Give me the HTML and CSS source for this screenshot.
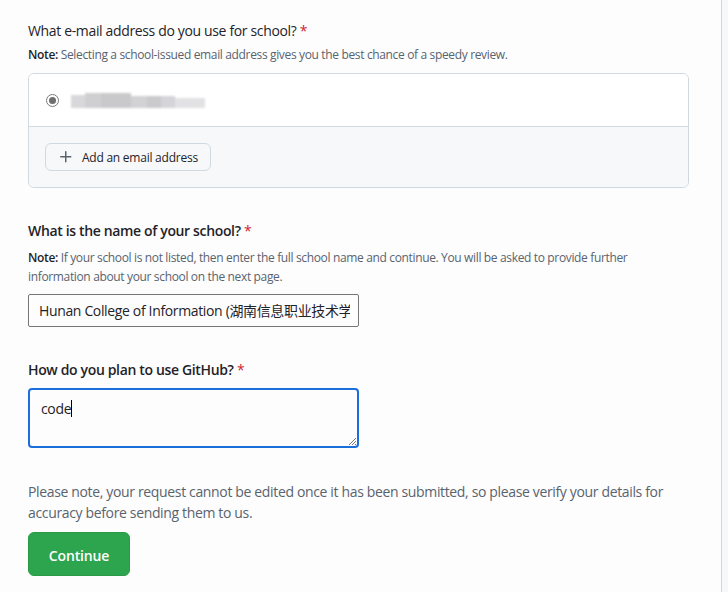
FILE: index.html
```html
<!DOCTYPE html>
<html lang="en">
<head>
<meta charset="utf-8">
<title>School information</title>
<link rel="stylesheet" href="styles.css">
</head>
<body>
<div class="page">
  <main class="content">
    <form class="form">
      <section class="field field-email">
        <h2 class="label label-light">What e-mail address do you use for school? <span class="req">*</span></h2>
        <p class="note"><strong>Note:</strong> Selecting a school-issued email address gives you the best chance of a speedy review.</p>
        <div class="email-box">
          <div class="email-row">
            <span class="radio"><span class="radio-dot"></span></span>
            <span class="redacted">
              <span class="blk b1"></span><span class="blk b2"></span><span class="blk b3"></span><span class="blk b4"></span><span class="blk b5"></span><span class="blk b6"></span><span class="blk b7"></span>
            </span>
          </div>
          <div class="email-foot">
            <button type="button" class="btn">
              <svg class="plus" width="16" height="16" viewBox="0 0 16 16" aria-hidden="true"><path d="M7.75 2a.75.75 0 0 1 .75.75V7h4.25a.75.75 0 0 1 0 1.5H8.5v4.25a.75.75 0 0 1-1.5 0V8.5H2.75a.75.75 0 0 1 0-1.5H7V2.75A.75.75 0 0 1 7.75 2Z"/></svg>
              <span>Add an email address</span>
            </button>
          </div>
        </div>
      </section>

      <section class="field field-school">
        <h2 class="label">What is the name of your school? <span class="req">*</span></h2>
        <p class="note note-wrap"><strong>Note:</strong> If your school is not listed, then enter the full school name and continue. You will be asked to provide further information about your school on the next page.</p>
        <div class="input"><span class="input-text">Hunan College of Information (湖南信息职业技术学院)</span></div>
      </section>

      <section class="field field-use">
        <h2 class="label">How do you plan to use GitHub? <span class="req">*</span></h2>
        <div class="textarea">code<span class="caret"></span>
          <svg class="grip" width="10" height="10" viewBox="0 0 10 10" aria-hidden="true"><path d="M9 2 2 9M9 5 5 9M9 8 8 9" stroke="#7a7a7a" stroke-width="1" fill="none"/></svg>
        </div>
      </section>

      <p class="warning">Please note, your request cannot be edited once it has been submitted, so please verify your details for accuracy before sending them to us.</p>
      <button type="button" class="btn-primary">Continue</button>
    </form>
  </main>
  <aside class="side"></aside>
</div>
</body>
</html>
```

FILE: styles.css
```css
* { box-sizing: border-box; }
html, body { margin: 0; padding: 0; background: #ffffff; }
body {
  font-family: "Segoe UI", "Open Sans", "Noto Sans", "Noto Sans CJK SC", sans-serif;
  color: #1f2328;
  font-size: 14px;
  letter-spacing: -0.025em;
}
.page {
  display: flex;
  min-height: 592px;
}
.content {
  width: 722px;
  border-right: 1px solid #d4d7dd;
  background: #fdfdfd;
  padding: 21px 0 0 28px;
}
.side {
  flex: 1;
  background: #f6f8fa;
}
.form { width: 661px; }
.field { margin: 0; }
.label {
  margin: 0;
  font-size: 14px;
  line-height: 20px;
  font-weight: 600;
  color: #1f2328;
}
.label-light { font-weight: 400; }
.req { color: #d1242f; font-weight: 400; }
.note {
  margin: 5px 0 0;
  font-size: 12px;
  line-height: 18px;
  color: #59636e;
}
.note strong { color: #1f2328; font-weight: 600; }
.note-wrap { margin-top: 7px; line-height: 19px; }

.email-box {
  margin-top: 9px;
  border: 1px solid #d1d9e0;
  border-radius: 6px;
  overflow: hidden;
}
.email-row {
  height: 53px;
  display: flex;
  align-items: center;
  padding-left: 16px;
  background: #ffffff;
  border-bottom: 1px solid #d1d9e0;
  gap: 12px;
}
.radio {
  width: 13px;
  height: 13px;
  border-radius: 50%;
  border: 1px solid #7a7a7a;
  display: flex;
  align-items: center;
  justify-content: center;
  background: #fff;
  margin-left: 1px;
}
.radio-dot {
  width: 7px;
  height: 7px;
  border-radius: 50%;
  background: #6e6e6e;
}
.redacted {
  display: flex;
  align-items: flex-end;
  height: 15px;
  filter: blur(1px);
  margin-top: 1px;
}
.blk { display: block; height: 100%; }
.b1 { width: 14px; background: #d8d8da; height: 13px; }
.b2 { width: 16px; background: #cfcfd1; }
.b3 { width: 30px; background: #c9c9cb; }
.b4 { width: 16px; background: #d2d2d4; height: 12px; }
.b5 { width: 14px; background: #cacacc; height: 12px; }
.b6 { width: 14px; background: #d5d5d9; height: 12px; }
.b7 { width: 30px; background: #e2e2e4; height: 10px; }

.email-foot {
  background: #f6f8fa;
  padding: 16px 16px;
}
.btn {
  display: inline-flex;
  align-items: center;
  gap: 8px;
  height: 28px;
  padding: 0 12px;
  font-family: inherit;
  font-size: 12px;
  font-weight: 500;
  letter-spacing: -0.02em;
  color: #1f2328;
  background: #f6f8fa;
  border: 1px solid #d1d9e0;
  border-radius: 6px;
}
.plus { fill: #59636e; }

.field-school { margin-top: 33px; }
.input {
  margin-top: 8px;
  width: 331px;
  height: 33px;
  border: 1px solid #767676;
  border-radius: 2px;
  padding: 1px 10px 0;
  font-size: 14px;
  line-height: 30px;
  white-space: nowrap;
  overflow: hidden;
  color: #1f2328;
}
.input-text { display: block; width: 311px; overflow: hidden; }

.field-use { margin-top: 33px; }
.textarea {
  position: relative;
  margin-top: 8px;
  width: 331px;
  height: 60px;
  border: 2px solid #1a6fdb;
  border-radius: 4px;
  padding: 9px 11px;
  font-size: 14px;
  line-height: 20px;
  color: #1f2328;
}
.caret {
  display: inline-block;
  width: 1px;
  height: 17px;
  background: #000;
  vertical-align: -3px;
}
.grip {
  position: absolute;
  right: 0;
  bottom: 0;
}

.warning {
  margin: 33px 0 0;
  font-size: 14px;
  line-height: 21px;
  color: #59636e;
}
.btn-primary {
  margin-top: 9px;
  width: 102px;
  height: 44px;
  border: 1px solid #2a9a48;
  border-radius: 6px;
  background: #2da44e;
  color: #ffffff;
  font-family: inherit;
  font-size: 14px;
  font-weight: 600;
  letter-spacing: -0.01em;
  padding: 3px 0 0;
}
```
